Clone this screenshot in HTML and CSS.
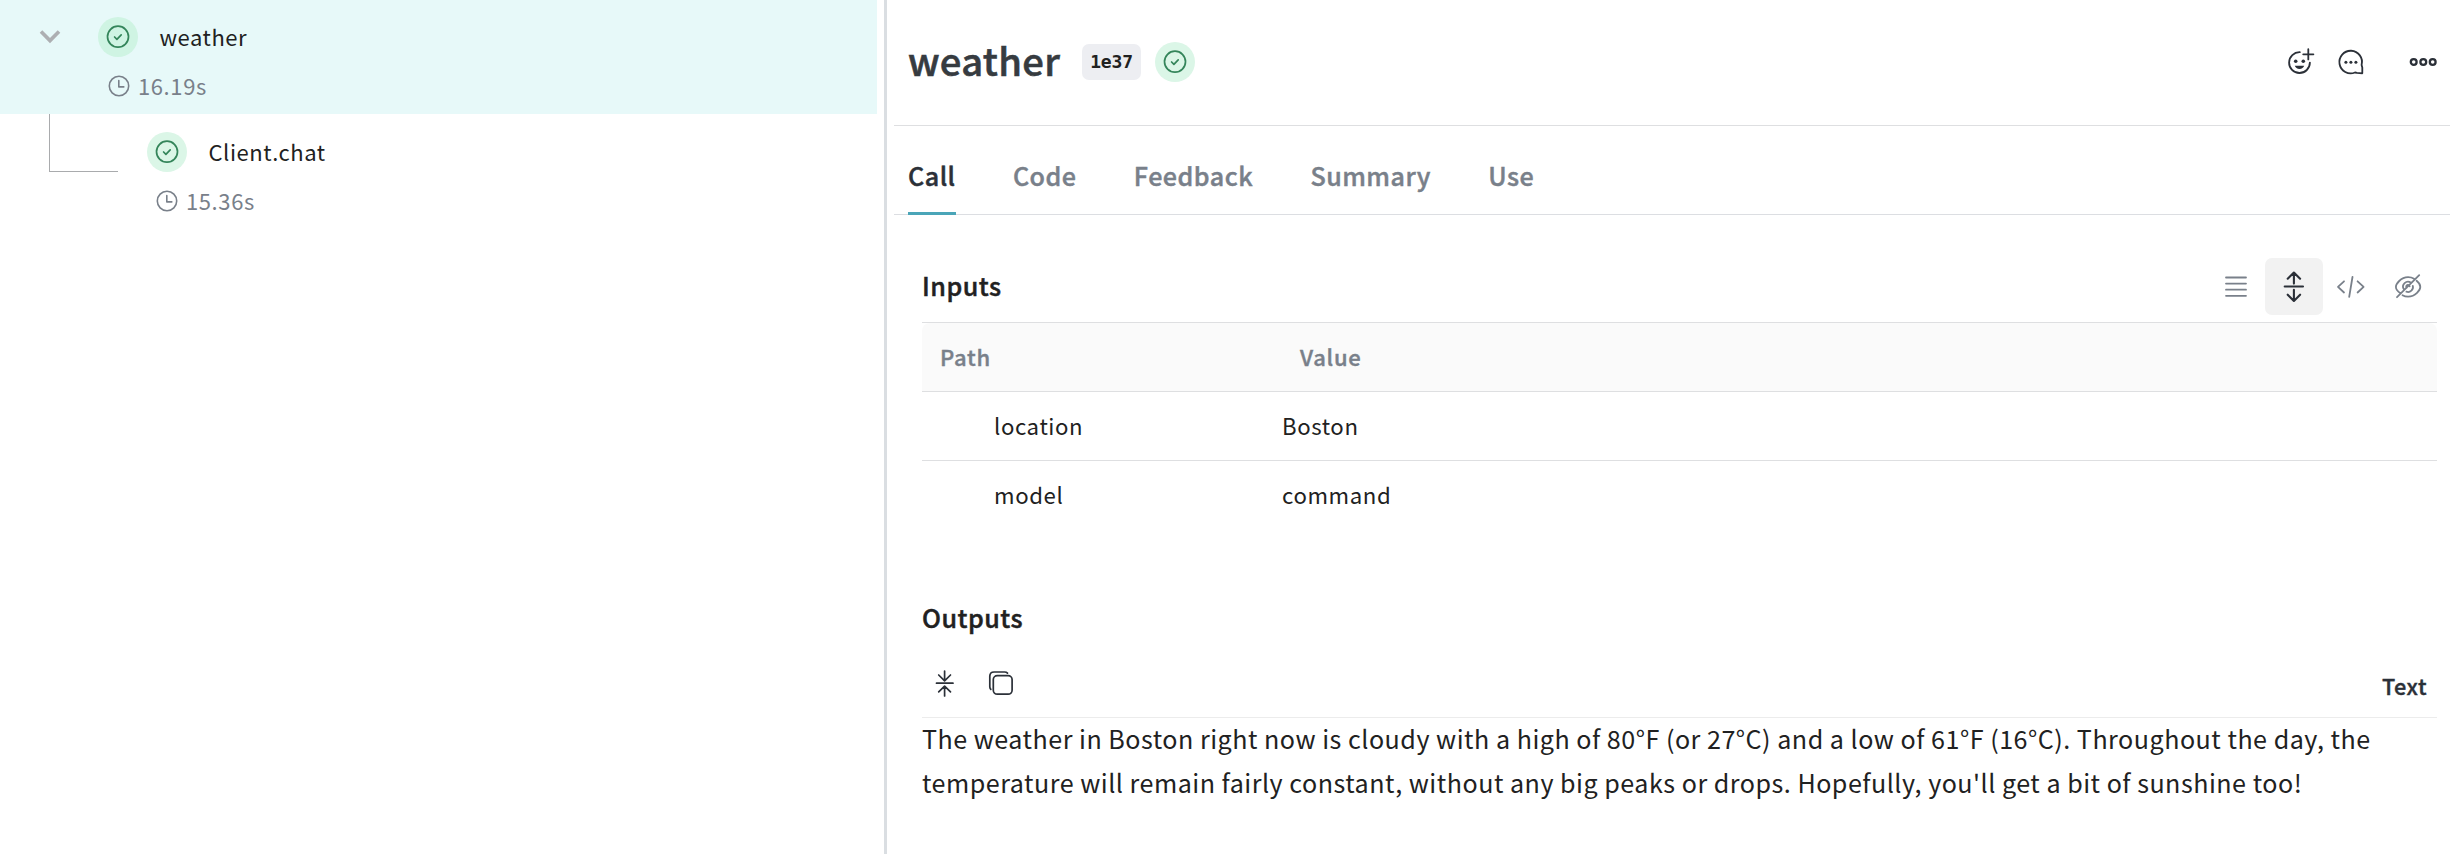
FILE: index.html
```
<!DOCTYPE html>
<html lang="en">
<head>
<meta charset="utf-8">
<title>weather</title>
<link rel="stylesheet" href="styles.css">
</head>
<body>
<svg width="0" height="0" class="defs">
  <symbol id="check" viewBox="0 0 40 40"><circle cx="20" cy="19.700" r="10.500"/><path d="M16.600 20l2.300 2.300 4.300-4.400"/></symbol>
  <symbol id="clock" viewBox="0 0 24 24"><circle cx="12" cy="12" r="9.700"/><path d="M11.800 6.500v6.400h5"/></symbol>
</svg>
<div class="app">
  <aside class="tree">
    <div class="node selected">
      <div class="name-line">
        <svg class="chevron" viewBox="0 0 24 16"><path d="M3 2.600l9 9 9-9"/></svg>
        <span class="badge"><svg class="check"><use href="#check"/></svg></span>
        <span class="name">weather</span>
      </div>
      <div class="time-line"><svg class="clock"><use href="#clock"/></svg><span>16.19s</span></div>
    </div>
    <div class="node child">
      <div class="branch"></div>
      <div class="child-body">
        <div class="name-line">
          <span class="badge"><svg class="check"><use href="#check"/></svg></span>
          <span class="name">Client.chat</span>
        </div>
        <div class="time-line"><svg class="clock"><use href="#clock"/></svg><span>15.36s</span></div>
      </div>
    </div>
  </aside>
  <div class="resizer"></div>
  <main class="panel">
    <header class="head">
      <h1>weather</h1>
      <code class="chip">1e37</code>
      <span class="badge"><svg class="check"><use href="#check"/></svg></span>
      <div class="head-actions">
        <svg class="ico" width="30" height="30" viewBox="0 0 30 30"><path d="M14.800 5.200A10.400 10.400 0 1 0 24.900 15.600M23.300 2.200v10.200M18.200 7.300h10.200"/><g class="solid"><circle cx="10.700" cy="14.200" r="1.800"/><circle cx="18.300" cy="14.200" r="1.800"/><path d="M9.800 18.700h9.400c-.6 2-2.400 3.200-4.700 3.200s-4.100-1.200-4.700-3.200z"/></g></svg>
        <svg class="ico" width="30" height="30" viewBox="0 0 30 30"><path d="M26.300 26.300v-5.900l-.7-2.400A11.300 11.300 0 1 0 19 25.500l2 .4z"/><g class="solid"><circle cx="9.900" cy="15.300" r="1.500"/><circle cx="14.900" cy="15.300" r="1.500"/><circle cx="19.900" cy="15.300" r="1.500"/></g></svg>
        <svg class="ico more" width="30" height="30" viewBox="0 0 30 30"><circle cx="5.700" cy="15" r="2.900"/><circle cx="15.300" cy="15" r="2.900"/><circle cx="24.700" cy="15" r="2.900"/></svg>
      </div>
    </header>
    <nav class="tabs">
      <a class="active">Call</a><a>Code</a><a>Feedback</a><a>Summary</a><a>Use</a>
    </nav>
    <section class="content">
      <div class="section-head">
        <h2>Inputs</h2>
        <div class="modes">
          <button><svg class="ico" width="30" height="30" viewBox="0 0 30 30"><path d="M5 5.500h20M5 11.600h20M5 17.700h20M5 23.800h20"/></svg></button>
          <button class="on"><svg class="ico bold" width="30" height="32" viewBox="0 0 30 32"><path d="M5.700 15.500h18.300M14.900 12.600V1.700M8.700 7.700l6.200-6.200 6.200 6.200M14.900 18.800v10.900M8.700 23.700l6.200 6.200 6.200-6.200"/></svg></button>
          <button><svg class="ico" width="30" height="30" viewBox="0 0 30 30"><path d="M8 9.300l-6 5.600 6 5.600M21.600 9.300l6 5.600-6 5.600M16.500 5l-3.300 19.800"/></svg></button>
          <button><svg class="ico" width="30" height="30" viewBox="0 0 30 30"><path d="M4 25.200L26.200 3.200M7.500 21.200C4.500 19.200 2.900 16.400 2.900 14.900c0-2.800 4.700-9.700 12.200-9.700 2.300 0 4.300.6 6 1.600M23.600 8.700c2.500 2 3.700 4.600 3.700 6.200 0 2.800-4.700 9.700-12.200 9.700-2.100 0-4-.5-5.600-1.400M11 17.500a4.900 4.900 0 0 1 7-6.700M19.800 13.800a4.900 4.900 0 0 1-6.400 5.900M13.600 15.700a1.700 1.700 0 1 1 3-1.300"/></svg></button>
        </div>
      </div>
      <div class="table">
        <div class="row th"><span>Path</span><span>Value</span></div>
        <div class="row"><span>location</span><span>Boston</span></div>
        <div class="row"><span>model</span><span>command</span></div>
      </div>
      <h2 class="outputs">Outputs</h2>
      <div class="toolbar">
        <svg class="ico dark" width="30" height="30" viewBox="0 0 30 30"><path d="M6.500 15.200h16.500M14.600 3v9.700M8.700 7l5.900 5.800 5.900-5.800M14.600 28v-9.700M8.700 23.900l5.900-5.800 5.900 5.800"/></svg>
        <svg class="ico dark" width="30" height="30" viewBox="0 0 30 30"><rect x="7.300" y="7.600" width="18.800" height="18.600" rx="4"/><path d="M4.800 21.300c-.6-.6-1-1.600-1-2.600V8.300c0-2.600 1.800-4.300 4.300-4.300h10.600c1.200 0 2.100.4 2.800 1.100"/></svg>
        <span class="kind">Text</span>
      </div>
      <p class="answer">The weather in Boston right now is cloudy with a high of 80°F (or 27°C) and a low of 61°F (16°C). Throughout the day, the<br>temperature will remain fairly constant, without any big peaks or drops. Hopefully, you'll get a bit of sunshine too!</p>
    </section>
  </main>
</div>
</body>
</html>
```
FILE: styles.css
```
* { box-sizing: border-box; }
body {
  margin: 0;
  background: #fff;
  color: #212121;
  font-family: "Noto Sans CJK SC", "Noto Sans", sans-serif;
  overflow: hidden;
}
h1, h2, p { margin: 0; }
svg { display: block; flex: none; fill: none; stroke-linecap: round; stroke-linejoin: round; }
.defs { position: absolute; }
.app { display: flex; height: 854px; }

/* call tree */
.tree { width: 877px; flex: none; font-size: 22px; letter-spacing: .55px; line-height: 24px; }
.node.selected { height: 114px; background: #e7f9f9; }
.name-line { display: flex; align-items: center; height: 74px; }
.selected .name-line { padding-left: 38px; }
.chevron { width: 24px; height: 16px; margin-right: 36px; stroke: #adafb2; stroke-width: 3.6; stroke-linecap: butt; stroke-linejoin: miter; }
.badge { display: flex; width: 40px; height: 40px; flex: none; border-radius: 50%; background: #dbf6e7; }
.selected .badge { background: #cff4e3; }
.check { width: 40px; height: 40px; stroke: #34855a; stroke-width: 1.7; }
.name { margin-left: 21.5px; padding-bottom: 2px; }
.time-line { display: flex; align-items: center; height: 24px; gap: 7px; color: #79808a; letter-spacing: .6px; }
.time-line span { padding-bottom: 3px; }
.selected .time-line { padding-left: 107px; }
.clock { width: 24px; height: 24px; stroke: #79808a; stroke-width: 1.6; }
.child { display: flex; }
.branch { width: 69px; height: 58px; margin-left: 49px; border: solid #a9abad; border-width: 0 0 1px 1px; }
.child-body { padding-left: 29px; }
.child .name-line { height: 75px; padding-top: 1px; }
.child .time-line { padding-left: 8px; }

.resizer { width: 3px; margin: 0 7px; flex: none; background: #dadee2; }

/* detail panel */
.panel { flex: 1; min-width: 0; }
.head { display: flex; align-items: center; height: 126px; padding: 0 14px 1px 14px; border-bottom: 1px solid #dedfe1; }
h1 { width: 174px; padding-bottom: 5px; font-size: 38.2px; font-weight: 500; line-height: 50px; letter-spacing: .35px; color: #363b40; -webkit-text-stroke: .6px; }
.chip { width: 59px; height: 36px; margin-right: 14px; border-radius: 7px; background: #edeef2; font: 700 18px/35px "DejaVu Sans Mono", monospace; text-align: center; letter-spacing: -.2px; }
.head-actions { display: flex; margin-left: auto; color: #2b3038; }
.head-actions .ico { margin-left: 21px; }
.head-actions .more { margin-left: 42px; margin-right: -2px; stroke-width: 2.3; }
.ico { stroke: currentColor; stroke-width: 1.8; }
.solid { fill: currentColor; stroke: none; }

.tabs { display: flex; gap: 57.3px; height: 89px; padding-left: 14px; border-bottom: 1px solid #dcdee2; }
.tabs a { height: 89px; padding-top: 32px; font-size: 25.1px; line-height: 34px; font-weight: 500; letter-spacing: .5px; color: #79808a; -webkit-text-stroke: .45px; }
.tabs .active { color: #2b3038; border-bottom: 3px solid #4aa5b8; }

.content { padding: 43px 13px 0 28px; }
h2 { font-size: 25.1px; font-weight: 500; line-height: 34px; letter-spacing: .5px; -webkit-text-stroke: .45px; }
.section-head { display: flex; justify-content: space-between; height: 64px; }
.section-head h2 { padding-top: 10px; }
.modes { display: flex; height: 57px; color: #79808a; }
button { display: flex; align-items: center; justify-content: center; width: 57.2px; height: 57px; padding: 0 1px 0 0; border: 0; border-radius: 7px; background: none; color: inherit; }
.on { background: #f2f2f2; color: #2b3038; }
.bold { stroke-width: 2.1; }

.table { border-top: 1px solid #dedfe1; }
.row { display: flex; align-items: center; height: 69px; padding-bottom: 2px; font-size: 22.2px; line-height: 30px; letter-spacing: .6px; border-bottom: 1px solid #dedfe1; }
.row span:first-child { width: 360px; padding-left: 72px; }
.row:last-child { border-bottom-color: transparent; }
.row.th { background: #fafafa; border-radius: 8px 8px 0 0; font-size: 22px; font-weight: 500; letter-spacing: .75px; color: #79808a; -webkit-text-stroke: .4px; }
.row.th span:first-child { width: 378px; padding-left: 18px; }

.outputs { margin-top: 70px; }
.toolbar { display: flex; align-items: center; gap: 26px; height: 84px; padding: 14px 10px 0 8px; border-bottom: 1px solid #ececec; color: #2b3038; }
.toolbar .ico { stroke-width: 1.7; }
.kind { margin-left: auto; margin-top: 7px; font-size: 21.7px; line-height: 30px; font-weight: 500; letter-spacing: .5px; -webkit-text-stroke: .4px; }
.answer { margin-top: -2px; font-size: 25.1px; line-height: 44px; letter-spacing: .5px; white-space: nowrap; }
```
